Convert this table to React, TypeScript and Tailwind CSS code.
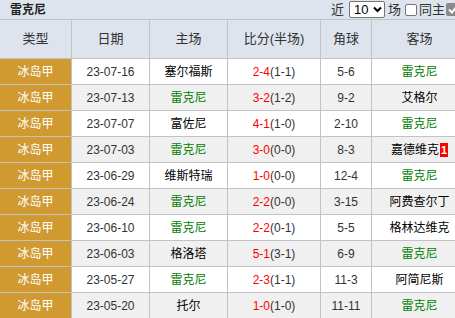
import React from "react";

type Match = {
  date: string;
  home: string;
  score: string;
  half: string;
  corner: string;
  away: string;
  badge?: string;
};

const TEAM = "雷克尼";

const matches: Match[] = [
  { date: "23-07-16", home: "塞尔福斯", score: "2-4", half: "(1-1)", corner: "5-6", away: TEAM },
  { date: "23-07-13", home: TEAM, score: "3-2", half: "(1-2)", corner: "9-2", away: "艾格尔" },
  { date: "23-07-07", home: "富佐尼", score: "4-1", half: "(1-0)", corner: "2-10", away: TEAM },
  { date: "23-07-03", home: TEAM, score: "3-0", half: "(0-0)", corner: "8-3", away: "嘉德维克", badge: "1" },
  { date: "23-06-29", home: "维斯特瑞", score: "1-0", half: "(0-0)", corner: "12-4", away: TEAM },
  { date: "23-06-24", home: TEAM, score: "2-2", half: "(0-0)", corner: "3-15", away: "阿费查尔丁" },
  { date: "23-06-10", home: TEAM, score: "2-2", half: "(0-1)", corner: "5-5", away: "格林达维克" },
  { date: "23-06-03", home: "格洛塔", score: "5-1", half: "(3-1)", corner: "6-9", away: TEAM },
  { date: "23-05-27", home: TEAM, score: "2-3", half: "(1-1)", corner: "11-3", away: "阿简尼斯" },
  { date: "23-05-20", home: "托尔", score: "1-0", half: "(1-0)", corner: "11-11", away: TEAM },
];

const cols = "grid grid-cols-[72px_78px_78px_93px_51px_96px] w-[468px]";
const cell = "flex items-center justify-center border-r border-b border-[#c3c3c3]";

const teamClass = (name: string) => (name === TEAM ? "text-[#008000]" : "text-black");

const App = () => {
  return (
    <div
      className="w-[455px] h-[318px] overflow-hidden bg-white text-[12px] text-[#333]"
      style={{ fontFamily: '"Liberation Sans", "Noto Sans CJK SC", sans-serif' }}
    >
      <div className="w-[468px] h-[20px] flex items-center bg-[#dde4ed] border-b border-[#c3c3c3] whitespace-nowrap">
        <div className="pl-[10px] font-bold text-[12px] text-[#222]">{TEAM}</div>
        <div className="ml-[285px] flex items-center text-[13px] text-[#333]">
          <span>近</span>
          <div className="ml-[5px] w-[36px] h-[17px] bg-white border border-[#767676] rounded-[2px] flex items-center justify-between pl-[4px] pr-[2px] text-[13px] text-black">
            <span>10</span>
            <svg width="9" height="7" viewBox="0 0 9 7">
              <path d="M1 1.5 L4.5 5 L8 1.5" stroke="#000" strokeWidth="2" fill="none" />
            </svg>
          </div>
          <span className="ml-[3px]">场</span>
          <span className="ml-[4px] w-[12px] h-[12px] bg-white border border-[#767676] rounded-[2px]" />
          <span className="ml-[2px]">同主</span>
          <span className="ml-[1px] w-[13px] h-[13px] bg-[#8a8a8a] rounded-[2px] flex items-center justify-center">
            <svg width="10" height="9" viewBox="0 0 10 9">
              <path d="M1 4.5 L4 7.5 L9 1" stroke="#fff" strokeWidth="2" fill="none" />
            </svg>
          </span>
        </div>
      </div>

      <div className={`${cols} h-[39px] bg-[#dde4ed] text-[13px] text-[#333]`}>
        {["类型", "日期", "主场", "比分(半场)", "角球", "客场"].map((h) => (
          <div key={h} className={cell}>
            {h}
          </div>
        ))}
      </div>

      {matches.map((m, i) => (
        <div key={m.date} className={`${cols} h-[26px] ${i % 2 === 0 ? "bg-white" : "bg-[#f0f0f0]"}`}>
          <div className={`${cell} bg-[#d09a30] text-white`}>冰岛甲</div>
          <div className={cell}>{m.date}</div>
          <div className={`${cell} ${teamClass(m.home)}`}>{m.home}</div>
          <div className={cell}>
            <span className="text-[#ff0000]">{m.score}</span>
            <span>{m.half}</span>
          </div>
          <div className={cell}>{m.corner}</div>
          <div className={`${cell} ${teamClass(m.away)}`}>
            {m.away}
            {m.badge && (
              <span className="ml-[1px] h-[14px] px-[1px] bg-[#ff0000] text-white font-bold text-[11px] leading-[14px]">
                {m.badge}
              </span>
            )}
          </div>
        </div>
      ))}
    </div>
  );
};

export default App;
